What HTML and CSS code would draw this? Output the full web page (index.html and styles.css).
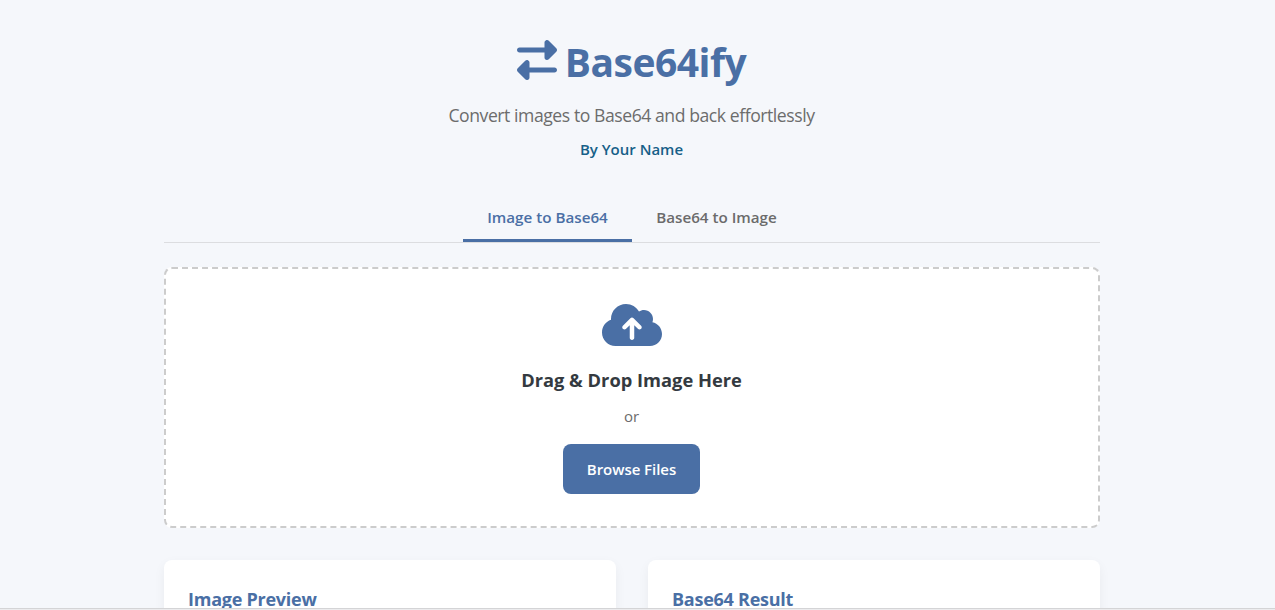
FILE: index.html
```html
<!DOCTYPE html>
<html lang="en">
<head>
<meta charset="utf-8">
<title>Base64ify</title>
<link rel="stylesheet" href="styles.css">
</head>
<body>
<div class="viewport">
  <div class="container">
    <header class="header">
      <h1 class="title">
        <svg class="title-icon" viewBox="0 0 512 512" aria-hidden="true"><path d="M32 96l320 0 0-64c0-12.900 7.800-24.600 19.800-29.600s25.700-2.200 34.900 6.900l96 96c6 6 9.400 14.100 9.400 22.600s-3.400 16.600-9.400 22.600l-96 96c-9.200 9.200-22.900 11.900-34.900 6.900s-19.800-16.600-19.800-29.600l0-64L32 160c-17.700 0-32-14.300-32-32s14.300-32 32-32zM480 352c17.700 0 32 14.300 32 32s-14.300 32-32 32l-320 0 0 64c0 12.900-7.800 24.600-19.800 29.600s-25.700 2.200-34.900-6.900l-96-96c-6-6-9.400-14.100-9.400-22.600s3.400-16.600 9.400-22.600l96-96c9.200-9.200 22.900-11.900 34.900-6.900s19.800 16.600 19.800 29.600l0 64 320 0z"/></svg>
        <span class="title-text">Base64ify</span>
      </h1>
      <p class="tagline">Convert images to Base64 and back effortlessly</p>
      <p class="author">By Your Name</p>
    </header>
    <nav class="tabs">
      <button class="tab tab-active">Image to Base64</button>
      <button class="tab">Base64 to Image</button>
    </nav>
    <section class="dropzone">
      <svg class="cloud" viewBox="0 0 640 512" aria-hidden="true"><path d="M144 480C64.500 480 0 415.500 0 336c0-62.800 40.200-116.200 96.200-135.900c-.1-2.700-.2-5.400-.2-8.100c0-88.400 71.600-160 160-160c59.300 0 111 32.200 138.700 80.200C409.900 102 428.300 96 448 96c53 0 96 43 96 96c0 12.200-2.300 23.800-6.400 34.600C596 238.400 640 290.100 640 352c0 70.700-57.300 128-128 128H144zm79-217c-9.400 9.400-9.400 24.600 0 33.900s24.600 9.400 33.900 0l39-39V392c0 13.300 10.700 24 24 24s24-10.700 24-24V257.900l39 39c9.400 9.400 24.600 9.400 33.900 0s9.400-24.600 0-33.900l-80-80c-9.400-9.400-24.600-9.400-33.900 0l-80 80z"/></svg>
      <h2 class="drop-title">Drag &amp; Drop Image Here</h2>
      <p class="drop-or">or</p>
      <button class="browse">Browse Files</button>
    </section>
    <div class="cards">
      <section class="card"><h3 class="card-title">Image Preview</h3></section>
      <section class="card"><h3 class="card-title">Base64 Result</h3></section>
    </div>
  </div>
</div>
</body>
</html>
```

FILE: styles.css
```css
* { box-sizing: border-box; margin: 0; padding: 0; }
html, body { height: 610px; overflow: hidden; }
body {
  background: #ececee;
  font-family: "Open Sans", "Noto Sans", sans-serif;
  color: #343a40;
  white-space: nowrap;
}
.viewport {
  height: 609px;
  overflow: hidden;
  background: #f5f7fb;
  border-bottom: 1px solid #d4d4d6;
}
.container { width: 936px; margin-left: 164px; padding-top: 32px; }
.header { display: flex; flex-direction: column; align-items: center; height: 162px; padding-right: 1px; }
.title {
  display: flex;
  align-items: center;
  gap: 8px;
  height: 60px;
  color: #4a6fa5;
  font-size: 39px;
  font-weight: 700;
  line-height: 60px;
}
.title-icon { width: 40px; height: 40px; margin-bottom: 4px; fill: #4a6fa5; }
.title-text { letter-spacing: -0.5px; }
.tagline { margin-top: 9px; font-size: 17.6px; line-height: 28px; letter-spacing: -0.44px; color: #6c6c6c; }
.author { margin-top: 8px; font-size: 15px; font-weight: 600; line-height: 24px; color: #166088; }
.tabs { display: flex; justify-content: center; height: 49px; border-bottom: 1px solid #dcdde0; }
.tab {
  width: 169px;
  height: 48px;
  padding-top: 1px;
  border: 0;
  border-bottom: 3px solid transparent;
  background: none;
  font: 600 15.2px/44px "Open Sans", sans-serif;
  color: #6b6b6b;
}
.tab-active { color: #4a6fa5; border-bottom-color: #4a6fa5; }
.dropzone {
  display: flex;
  flex-direction: column;
  align-items: center;
  height: 261px;
  margin-top: 24px;
  padding: 32px 1px 0 0;
  background: #fff;
  border: 2px dashed #ccc;
  border-radius: 8px;
}
.cloud { width: 60px; height: 48px; fill: #4a6fa5; }
.drop-title { margin-top: 16px; font-size: 18.3px; font-weight: 700; line-height: 30px; }
.drop-or { margin-top: 9px; font-size: 15px; line-height: 24px; color: #6c6c6c; }
.browse {
  width: 137px;
  height: 50px;
  margin-top: 16px;
  border: 0;
  border-radius: 8px;
  background: #4a6fa5;
  color: #fff;
  font: 600 15px/50px "Open Sans", sans-serif;
  letter-spacing: -0.05px;
}
.cards { display: grid; grid-template-columns: 1fr 1fr; gap: 32px; margin-top: 32px; }
.card {
  height: 200px;
  padding: 24px;
  background: #fff;
  border-radius: 8px;
  box-shadow: 0 4px 12px rgba(0, 0, 0, 0.05);
}
.card-title { font-size: 18px; font-weight: 700; line-height: 30px; letter-spacing: -0.25px; color: #4a6fa5; }
```
